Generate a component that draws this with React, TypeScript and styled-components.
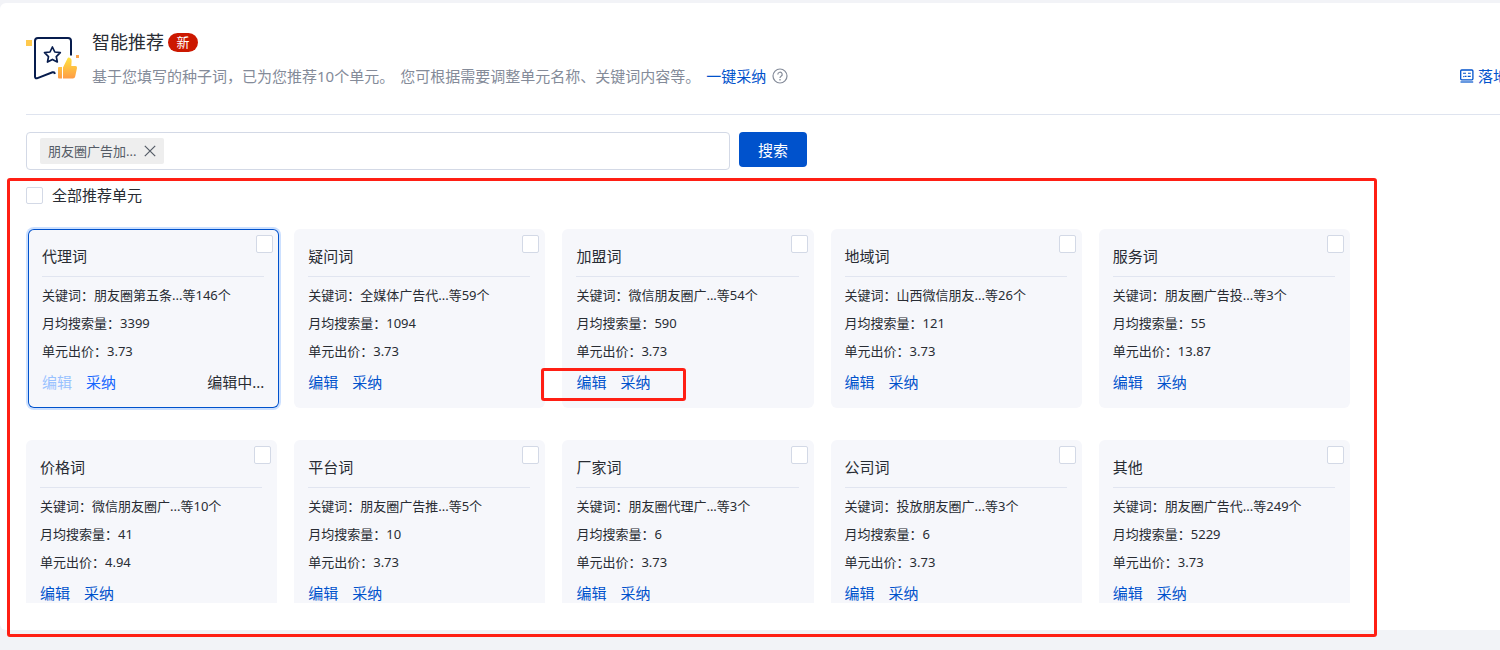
import React from "react";
import styled, { createGlobalStyle, css } from "styled-components";

const GlobalStyle = createGlobalStyle`
  *, *::before, *::after { box-sizing: border-box; }
  body {
    margin: 0;
    background: #f2f3f7;
    color: #282c33;
    font-family: "Noto Sans", "Noto Sans CJK SC", sans-serif;
    font-size: 15px;
    line-height: 24px;
  }
  button, input { font: inherit; color: inherit; }
`;

const Page = styled.div`
  min-height: 100vh;
  padding: 3px 0 20px;
  overflow-x: hidden;
`;

const Panel = styled.main`
  margin-right: -8px;
  padding: 27px 0 27px 26px;
  border-radius: 6px;
  background: #fff;
`;

const Header = styled.header`
  display: flex;
  align-items: flex-end;
  height: 85px;
  padding-bottom: 26px;
  border-bottom: 1px solid #dfe4ef;
`;

const Emblem = styled.svg`
  flex: none;
  align-self: flex-start;
  margin: 6px 12px 0 0;
`;

const HeaderText = styled.div`
  flex: 1;
  min-width: 0;
`;

const TitleRow = styled.div`
  display: flex;
  align-items: center;
  gap: 4px;
  margin-bottom: 10px;
`;

const Title = styled.h1`
  margin: 0;
  font-size: 18px;
  font-weight: 400;
  line-height: 24px;
`;

const Badge = styled.span`
  width: 30px;
  border-radius: 10px;
  background: #cc1800;
  color: #fff;
  font-size: 13px;
  line-height: 19px;
  text-align: center;
`;

const Description = styled.p`
  display: flex;
  align-items: center;
  gap: 6px;
  margin: 0;
  color: #848b99;
  white-space: nowrap;
`;

const TextLink = styled.a`
  display: inline-flex;
  align-items: center;
  gap: 4px;
  color: #0052cc;
  text-decoration: none;
  white-space: nowrap;
`;

const SearchBar = styled.form`
  display: flex;
  align-items: flex-start;
  gap: 9px;
  margin-top: 17px;
`;

const SearchField = styled.div`
  display: flex;
  align-items: center;
  gap: 8px;
  width: 47.5%;
  height: 38px;
  padding: 0 13px;
  border: 1px solid #d3d9e6;
  border-radius: 4px;
`;

const Tag = styled.span`
  display: flex;
  align-items: center;
  gap: 8px;
  height: 26px;
  padding: 0 8px;
  border-radius: 2px;
  background: #eee;
  color: #545b66;
  font-size: 13px;
  white-space: nowrap;
`;

const IconButton = styled.button`
  display: flex;
  padding: 0;
  border: 0;
  background: none;
  color: #545b66;
  cursor: pointer;
`;

const SearchInput = styled.input`
  flex: 1;
  min-width: 0;
  height: 30px;
  padding: 0;
  border: 0;
  outline: 0;
  background: none;
`;

const SearchButton = styled.button`
  height: 35px;
  padding: 0 19px;
  border: 0;
  border-radius: 4px;
  background: #0052cc;
  color: #fff;
  cursor: pointer;
`;

const Units = styled.section`
  position: relative;
  margin: 13px 158px 0 0;
`;

const Checkbox = styled.input.attrs({ type: "checkbox" })`
  appearance: none;
  flex: none;
  width: 17px;
  height: 17px;
  margin: 0;
  border: 1px solid #d3d9e6;
  border-radius: 2px;
  background: #fff;
  &:checked { background: #0052cc; }
`;

const SelectAll = styled.label`
  display: flex;
  align-items: center;
  gap: 9px;
  margin-bottom: 20px;
`;

const CardList = styled.div`
  display: grid;
  grid-template-columns: repeat(5, 1fr);
  gap: 32px 17px;
  height: 376px;
  padding-top: 2px;
  overflow: hidden;
`;

const Card = styled.article<{ $active: boolean }>`
  position: relative;
  height: 179px;
  padding: 0 15px 0 14px;
  border-radius: 6px;
  background: #f6f7fb;
  ${(p) =>
    p.$active &&
    css`
      margin: 0 -2px 0 2px;
      box-shadow: inset 0 0 0 1px #0052cc, 0 0 0 2px #cce0ff;
    `}
`;

const CardCheckbox = styled(Checkbox)`
  position: absolute;
  top: 6px;
  right: 6px;
  height: 18px;
`;

const CardTitle = styled.h2`
  margin: 0 0 4px;
  padding: 15px 0 8px;
  border-bottom: 1px solid #e1e5f0;
  font-size: 15px;
  font-weight: 400;
  line-height: 24px;
`;

const Fact = styled.p`
  margin: 0;
  font-size: 13px;
  line-height: 28px;
  white-space: nowrap;
`;

const Actions = styled.div`
  display: flex;
  gap: 14px;
  margin-top: 5px;
`;

const Action = styled.button<{ $bright?: boolean }>`
  padding: 0;
  border: 0;
  background: none;
  color: ${(p) => (p.$bright ? "#1466ff" : "#0052cc")};
  cursor: pointer;
  &:disabled { color: #99c2ff; cursor: default; }
`;

const Status = styled.span`
  margin-left: auto;
`;

const Outline = styled.div`
  position: absolute;
  border: 3px solid #ff1f14;
  border-radius: 3px;
  pointer-events: none;
`;

const SectionOutline = styled(Outline)`
  inset: -5px -27px -34px -19px;
`;

const ActionsOutline = styled(Outline)`
  left: -21px;
  bottom: 7px;
  width: 145px;
  height: 33px;
`;

type Unit = { name: string; words: string; searches: string; bid: string };

const units: Unit[] = [
  { name: "代理词", words: "朋友圈第五条...等146个", searches: "3399", bid: "3.73" },
  { name: "疑问词", words: "全媒体广告代...等59个", searches: "1094", bid: "3.73" },
  { name: "加盟词", words: "微信朋友圈广...等54个", searches: "590", bid: "3.73" },
  { name: "地域词", words: "山西微信朋友...等26个", searches: "121", bid: "3.73" },
  { name: "服务词", words: "朋友圈广告投...等3个", searches: "55", bid: "13.87" },
  { name: "价格词", words: "微信朋友圈广...等10个", searches: "41", bid: "4.94" },
  { name: "平台词", words: "朋友圈广告推...等5个", searches: "10", bid: "3.73" },
  { name: "厂家词", words: "朋友圈代理广...等3个", searches: "6", bid: "3.73" },
  { name: "公司词", words: "投放朋友圈广...等3个", searches: "6", bid: "3.73" },
  { name: "其他", words: "朋友圈广告代...等249个", searches: "5229", bid: "3.73" },
];

function RecommendIcon() {
  return (
    <Emblem width="54" height="46" viewBox="0 0 54 46" fill="none" aria-hidden="true">
      <defs>
        <linearGradient id="thumb" x1="0" y1="0" x2="0" y2="1">
          <stop offset="0" stopColor="#ffe23f" />
          <stop offset="1" stopColor="#ff9c45" />
        </linearGradient>
      </defs>
      <rect y="4" width="6" height="6" fill="#ffc94d" />
      <rect x="50" y="19" width="3" height="3" fill="#ffa64d" />
      <path
        d="M45 19.500V5a3 3 0 0 0-3-3H12a3 3 0 0 0-3 3v35.500q0 2.500 2.500 1.600L26.500 36.300q2-.6 2.300 1.700"
        stroke="#071c4d"
        strokeWidth="2"
      />
      <path
        d="m26.400 11 2.400 5 5.500.7-4 3.900 1 5.400-4.900-2.600-4.900 2.600 1-5.400-4-3.900 5.500-.7z"
        stroke="#071c4d"
        strokeWidth="1.700"
        strokeLinejoin="round"
      />
      <path
        d="M33 31h3v11.500H33a1 1 0 0 1-1-1V32a1 1 0 0 1 1-1ZM37 31.500l4.600-9.200q.4-.9 1.300-.7 2.900.6 2.700 3.600L45.300 30h4.200q1.800.1 1.500 2l-1.800 8.600q-.4 1.900-2.300 1.900H37z"
        fill="url(#thumb)"
      />
    </Emblem>
  );
}

function HelpIcon() {
  return (
    <svg width="16" height="16" viewBox="0 0 16 16" fill="none" stroke="#848b99" aria-hidden="true">
      <circle cx="8" cy="8" r="7" strokeWidth="1.200" />
      <path d="M5.800 6.400a2.200 2.200 0 1 1 3.300 1.900C8.300 8.800 8 9.100 8 9.900" strokeWidth="1.200" />
      <path d="M8 11v1.400" strokeWidth="1.300" />
    </svg>
  );
}

function LandingIcon() {
  return (
    <svg width="14" height="14" viewBox="0 0 14 14" fill="none" stroke="#0052cc" aria-hidden="true">
      <rect x=".7" y="1" width="12.200" height="9.800" rx="1" strokeWidth="1.300" />
      <path d="M.5 13h12.700" strokeWidth="1.200" />
      <path d="M3 4.200h3M8 4.200h2.800M3.200 7.800l1.300-.4M5 7.400h1.500M7.700 7.400h3" strokeWidth="1.100" />
    </svg>
  );
}

function UnitCard({ unit, active, outlined }: { unit: Unit; active: boolean; outlined: boolean }) {
  return (
    <Card $active={active}>
      <CardCheckbox aria-label={unit.name} />
      <CardTitle>{unit.name}</CardTitle>
      <Fact>关键词：{unit.words}</Fact>
      <Fact>月均搜索量：{unit.searches}</Fact>
      <Fact>单元出价：{unit.bid}</Fact>
      <Actions>
        <Action type="button" disabled={active}>编辑</Action>
        <Action type="button" $bright={active}>采纳</Action>
        {active && <Status>编辑中...</Status>}
      </Actions>
      {outlined && <ActionsOutline />}
    </Card>
  );
}

export default function App() {
  return (
    <Page>
      <GlobalStyle />
      <Panel>
        <Header>
          <RecommendIcon />
          <HeaderText>
            <TitleRow>
              <Title>智能推荐</Title>
              <Badge>新</Badge>
            </TitleRow>
            <Description>
              <span>基于您填写的种子词，已为您推荐10个单元。</span>
              <span>您可根据需要调整单元名称、关键词内容等。</span>
              <TextLink href="#adopt">一键采纳</TextLink>
              <HelpIcon />
            </Description>
          </HeaderText>
          <TextLink href="#landing">
            <LandingIcon />
            落地
          </TextLink>
        </Header>
        <SearchBar onSubmit={(e) => e.preventDefault()}>
          <SearchField>
            <Tag>
              朋友圈广告加...
              <IconButton type="button" aria-label="删除">
                <svg width="12" height="12" viewBox="0 0 12 12" stroke="currentColor" strokeWidth="1.200">
                  <path d="M.8.8l10.400 10.400M11.200.8L.8 11.200" />
                </svg>
              </IconButton>
            </Tag>
            <SearchInput aria-label="种子词" />
          </SearchField>
          <SearchButton type="submit">搜索</SearchButton>
        </SearchBar>
        <Units>
          <SelectAll>
            <Checkbox />
            全部推荐单元
          </SelectAll>
          <CardList>
            {units.map((unit, i) => (
              <UnitCard key={unit.name} unit={unit} active={i === 0} outlined={i === 2} />
            ))}
          </CardList>
          <SectionOutline />
        </Units>
      </Panel>
    </Page>
  );
}
